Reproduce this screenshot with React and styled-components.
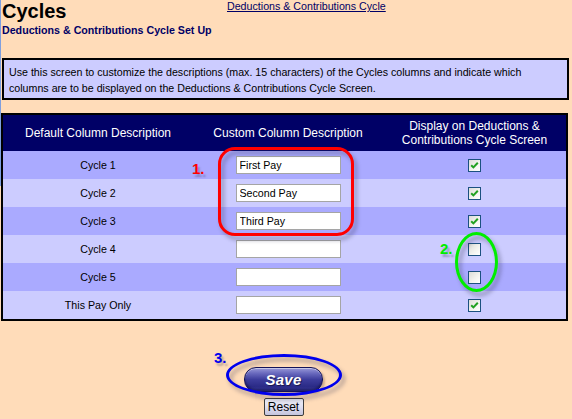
import React from "react";
import styled, { createGlobalStyle } from "styled-components";

const GlobalStyle = createGlobalStyle`
  html, body {
    margin: 0;
    padding: 0;
    background: #ffdcb9;
  }
  body {
    font-family: "Liberation Sans", Arial, sans-serif;
    color: #000;
  }
`;

const Page = styled.div`
  position: relative;
  width: 572px;
  height: 419px;
  overflow: hidden;
  background: #ffdcb9;
  /* thin frame edge on the left, only in the upper part */
  &::before {
    content: "";
    position: absolute;
    left: 0;
    top: 0;
    width: 1px;
    height: 186px;
    background: #7f9fdf;
  }
`;

const Header = styled.div`
  display: flex;
  align-items: flex-start;
  padding: 0 0 0 2px;
`;

const TitleBlock = styled.div`
  width: 225px;
`;

const Title = styled.h1`
  margin: 0;
  font-size: 20px;
  line-height: 23px;
  font-weight: bold;
  color: #000;
`;

const SubTitle = styled.h2`
  margin: 0;
  font-size: 8pt;
  line-height: 14px;
  font-weight: bold;
  color: #000066;
`;

const TopLink = styled.a`
  font-size: 8pt;
  line-height: 13px;
  color: #000066;
  text-decoration: underline;
  cursor: pointer;
`;

const InfoBox = styled.div`
  margin: 21px 3px 0 2px;
  border: 2px solid #000;
  background: #ccccff;
  padding: 4px 5px 2px;
  font-size: 8pt;
  line-height: 16px;
`;

const Grid = styled.table`
  margin: 13px 0 0 1px;
  width: 567px;
  border: 2px solid #000;
  border-collapse: collapse;
  table-layout: fixed;
`;

const Col = styled.col`
  width: ${(p) => (p.$w ? `${p.$w}px` : "auto")};
`;

const HeadCell = styled.th`
  background: #000066;
  color: #fff;
  font-weight: normal;
  font-size: 12px;
  line-height: 14px;
  height: 36px;
  padding: 0 4px;
  text-align: center;
`;

const Row = styled.tr`
  background: ${(p) => (p.$dark ? "#aaaaff" : "#ccccff")};
`;

const Cell = styled.td`
  height: 28px;
  padding: 0;
  text-align: center;
  font-size: 8pt;
`;

const TextBox = styled.input`
  box-sizing: border-box;
  width: 105px;
  height: 18px;
  border: 1px solid #a5a5a5;
  background: #fff;
  font-family: "Liberation Sans", Arial, sans-serif;
  font-size: 8pt;
  padding: 0 3px;
  color: #000;
  vertical-align: middle;
  outline: none;
`;

const Check = styled.span`
  display: inline-block;
  box-sizing: border-box;
  width: 13px;
  height: 13px;
  border: 1px solid #1c5180;
  background: linear-gradient(135deg, #dcdcd7 0%, #f4f4f0 60%, #ffffff 100%);
  vertical-align: middle;
  svg {
    display: block;
  }
`;

const Actions = styled.div`
  display: flex;
  flex-direction: column;
  align-items: center;
  width: 567px;
  margin-top: 46px;
  gap: 6px;
`;

const SaveButton = styled.button`
  width: 79px;
  height: 25px;
  border-radius: 12px;
  border: 1px solid #14145a;
  background: linear-gradient(
    to bottom,
    #9a9ad8 0%,
    #6b6bbf 22%,
    #3d3d9c 50%,
    #2b2b87 80%,
    #3a3a9a 100%
  );
  box-shadow: inset 0 1px 0 rgba(255, 255, 255, 0.45),
    inset 0 -2px 2px rgba(0, 0, 40, 0.4), 2px 2px 2px rgba(120, 90, 60, 0.35);
  color: #fff;
  font-family: "Liberation Sans", Arial, sans-serif;
  font-size: 15px;
  font-weight: bold;
  font-style: italic;
  letter-spacing: 0.3px;
  text-shadow: 1px 1px 0 #1a1a50;
  padding: 0;
  cursor: pointer;
`;

const ResetButton = styled.button`
  width: 40px;
  height: 18px;
  border: 1px solid #3c3c3c;
  border-radius: 2px;
  background: linear-gradient(to bottom, #f4f4fb 0%, #dcdcef 55%, #c4c4dc 100%);
  font-family: "Liberation Sans", Arial, sans-serif;
  font-size: 12px;
  color: #000;
  padding: 0;
  line-height: 16px;
  cursor: pointer;
`;

/* hand-drawn callout marks lying over the form */
const Ring = styled.div`
  position: absolute;
  box-sizing: border-box;
  left: ${(p) => p.$x}px;
  top: ${(p) => p.$y}px;
  width: ${(p) => p.$w}px;
  height: ${(p) => p.$h}px;
  border: 3px solid ${(p) => p.$color};
  border-radius: ${(p) => p.$radius};
  filter: drop-shadow(3px 4px 2px rgba(60, 60, 90, 0.45));
  pointer-events: none;
`;

const Mark = styled.span`
  position: absolute;
  left: ${(p) => p.$x}px;
  top: ${(p) => p.$y}px;
  font-size: 15px;
  font-weight: bold;
  line-height: 16px;
  color: ${(p) => p.$color};
  text-shadow: 2px 3px 2px rgba(60, 60, 90, 0.35);
  pointer-events: none;
`;

function CheckBox({ checked }) {
  return (
    <Check>
      {checked && (
        <svg width="11" height="11" viewBox="0 0 11 11">
          <path
            d="M2.2 5.2 L4.4 7.4 L8.8 2.8"
            fill="none"
            stroke="#21a121"
            strokeWidth="2"
          />
        </svg>
      )}
    </Check>
  );
}

const cycles = [
  { name: "Cycle 1", custom: "First Pay", shown: true },
  { name: "Cycle 2", custom: "Second Pay", shown: true },
  { name: "Cycle 3", custom: "Third Pay", shown: true },
  { name: "Cycle 4", custom: "", shown: false },
  { name: "Cycle 5", custom: "", shown: false },
  { name: "This Pay Only", custom: "", shown: true },
];

export default function App() {
  return (
    <>
      <GlobalStyle />
      <Page>
        <Header>
          <TitleBlock>
            <Title>Cycles</Title>
            <SubTitle>Deductions &amp; Contributions Cycle Set Up</SubTitle>
          </TitleBlock>
          <TopLink>Deductions &amp; Contributions Cycle</TopLink>
        </Header>

        <InfoBox>
          Use this screen to customize the descriptions (max. 15 characters) of
          the Cycles columns and indicate which columns are to be displayed on
          the Deductions &amp; Contributions Cycle Screen.
        </InfoBox>

        <Grid>
          <colgroup>
            <Col $w={191} />
            <Col $w={190} />
            <Col />
          </colgroup>
          <thead>
            <tr>
              <HeadCell>Default Column Description</HeadCell>
              <HeadCell>Custom Column Description</HeadCell>
              <HeadCell>
                Display on Deductions &amp;
                <br />
                Contributions Cycle Screen
              </HeadCell>
            </tr>
          </thead>
          <tbody>
            {cycles.map((c, i) => (
              <Row key={c.name} $dark={i % 2 === 0}>
                <Cell>{c.name}</Cell>
                <Cell>
                  <TextBox defaultValue={c.custom} maxLength={15} />
                </Cell>
                <Cell>
                  <CheckBox checked={c.shown} />
                </Cell>
              </Row>
            ))}
          </tbody>
        </Grid>

        <Actions>
          <SaveButton>Save</SaveButton>
          <ResetButton>Reset</ResetButton>
        </Actions>

        <Ring $x={218} $y={147} $w={136} $h={89} $color="#ff0000" $radius="17px" />
        <Mark $x={192} $y={161} $color="#ff0000">1.</Mark>

        <Ring $x={455} $y={232} $w={43} $h={60} $color="#00ee00" $radius="50%" />
        <Mark $x={440} $y={241} $color="#00ee00">2.</Mark>

        <Ring $x={226} $y={354} $w={116} $h={42} $color="#0000ee" $radius="50%" />
        <Mark $x={214} $y={350} $color="#0000ee">3.</Mark>
      </Page>
    </>
  );
}
